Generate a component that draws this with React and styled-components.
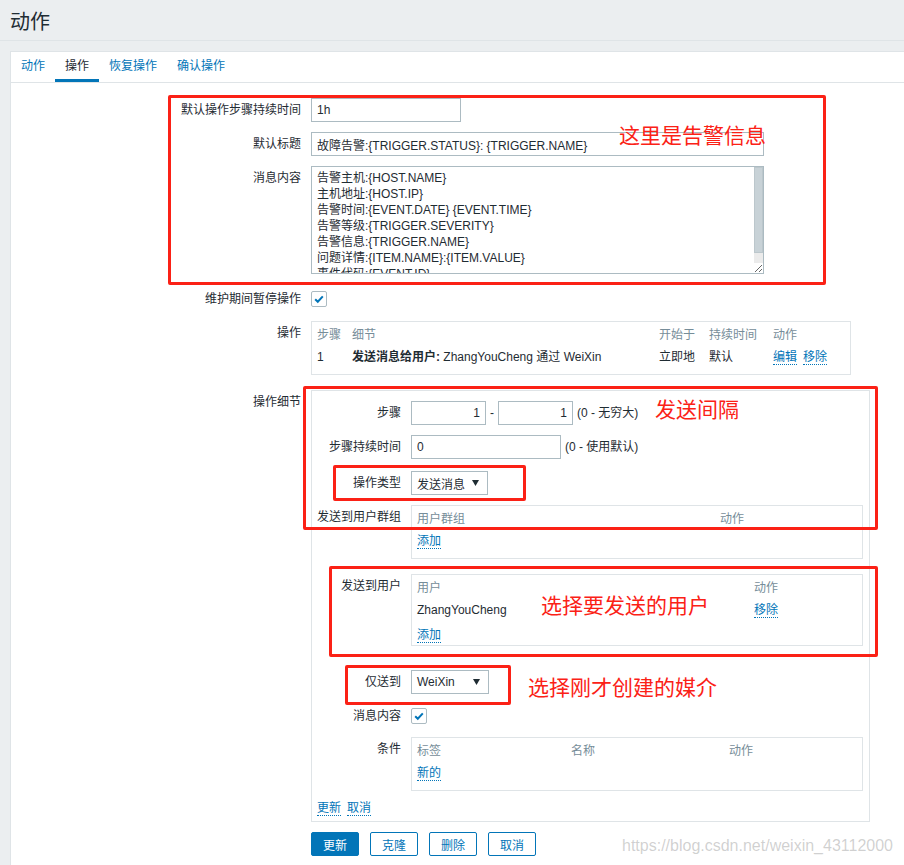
import React from "react";
import styled, { createGlobalStyle } from "styled-components";

const GlobalStyle = createGlobalStyle`
  body {
    margin: 0;
    background: #ebeef0;
    font-family: "Liberation Sans", "Noto Sans CJK SC", sans-serif;
    font-size: 12px;
    color: #1f2c33;
  }
  * { box-sizing: border-box; }
`;

const Page = styled.div`
  position: relative;
  min-height: 100vh;
  display: flex;
  flex-direction: column;
`;

const Header = styled.header`
  height: 41px;
  padding: 0 10px;
  border-bottom: 1px solid #dfe4e7;
  display: flex;
  align-items: center;
`;

const Title = styled.h1`
  margin: 0;
  font-size: 20px;
  font-weight: normal;
  color: #1f2c33;
`;

const Panel = styled.div`
  flex: 1;
  margin: 10px 0 0 10px;
  background: #fff;
  border: 1px solid #dfe4e7;
  border-right: none;
  border-bottom: none;
`;

const TabBar = styled.div`
  display: flex;
  border-bottom: 1px solid #dfe4e7;
`;

const Tab = styled.div`
  padding: 0 10px;
  height: 30px;
  line-height: 29px;
  border-bottom: 3px solid ${(p) => (p.$active ? "#0275b8" : "transparent")};
  color: ${(p) => (p.$active ? "#1f2c33" : "#0275b8")};
`;

const Form = styled.div`
  padding: 15px 0 10px;
`;

const Row = styled.div`
  display: grid;
  grid-template-columns: ${(p) => p.$label}px 1fr;
  column-gap: 10px;
  margin-top: ${(p) => p.$top}px;
`;

const Label = styled.div`
  text-align: right;
  line-height: 24px;
  white-space: nowrap;
`;

const Field = styled.div`
  display: flex;
  align-items: flex-start;
  gap: 4px;
  min-height: 24px;
`;

const Input = styled.input`
  width: ${(p) => p.$w}px;
  height: 24px;
  padding: 0 5px;
  border: 1px solid #acbbc2;
  background: #fff;
  font: inherit;
  color: #1f2c33;
  text-align: ${(p) => p.$align || "left"};
  outline: none;
`;

const TextWrap = styled.div`
  position: relative;
  width: 453px;
  height: 108px;
`;

const TextArea = styled.textarea`
  display: block;
  width: 100%;
  height: 100%;
  padding: 3px 15px 3px 5px;
  border: 1px solid #acbbc2;
  font: inherit;
  line-height: 16px;
  color: #1f2c33;
  resize: vertical;
  overflow: hidden;
  outline: none;
`;

/* the textarea's scrollbar, drawn over its right edge */
const ScrollTrack = styled.div`
  position: absolute;
  top: 1px;
  right: 1px;
  bottom: 11px;
  width: 9px;
  background: #ebebeb;
  pointer-events: none;
`;

const ScrollThumb = styled.div`
  height: 86px;
  background: #c8d2d7;
  border: 1px solid #bcc7cc;
`;

const Hint = styled.span`
  line-height: 24px;
  white-space: nowrap;
`;

const CheckBox = styled.span`
  display: inline-flex;
  align-items: center;
  justify-content: center;
  width: 16px;
  height: 16px;
  margin-top: 4px;
  border: 1px solid #acbbc2;
  border-radius: 2px;
  background: #fff;
`;

const Select = styled.div`
  display: flex;
  align-items: center;
  justify-content: space-between;
  width: ${(p) => p.$w}px;
  height: 24px;
  padding: 0 8px 0 5px;
  border: 1px solid #acbbc2;
  background: #fff;
`;

const Link = styled.a`
  color: #0275b8;
  text-decoration: none;
  border-bottom: 1px dotted #0275b8;
  margin-right: ${(p) => p.$gap || 0}px;
`;

const SubTable = styled.div`
  width: ${(p) => p.$w}px;
  border: 1px solid #dfe4e7;
  padding: 2px 5px ${(p) => (p.$pb === undefined ? 6 : p.$pb)}px;
  display: grid;
  grid-template-columns: ${(p) => p.$cols};
`;

const Th = styled.div`
  line-height: 22px;
  color: #768d99;
  white-space: nowrap;
`;

const Td = styled.div`
  line-height: ${(p) => p.$lh || 22}px;
  white-space: nowrap;
  grid-column: ${(p) => p.$span || "auto"};
  padding-top: ${(p) => p.$pt || 0}px;
`;

const DetailBox = styled.div`
  width: 559px;
  border: 1px solid #dfe4e7;
  padding: 10px 6px 2px 5px;
`;

const Footer = styled.div`
  margin-top: 6px;
  line-height: 22px;
`;

const Buttons = styled.div`
  display: flex;
  gap: 11px;
`;

const Button = styled.button`
  height: 24px;
  padding: 0 11px;
  border: 1px solid #0275b8;
  border-radius: 2px;
  font: inherit;
  background: ${(p) => (p.$primary ? "#0275b8" : "#fff")};
  color: ${(p) => (p.$primary ? "#fff" : "#0275b8")};
`;

/* red annotations drawn over the screenshot */
const Mark = styled.div`
  position: absolute;
  border: 3px solid #fb2116;
  border-radius: 2px;
  pointer-events: none;
`;

const Note = styled.div`
  position: absolute;
  color: #fb2116;
  font-family: "Noto Sans CJK SC", sans-serif;
  font-size: 21px;
  line-height: 22px;
  white-space: nowrap;
`;

const Watermark = styled.div`
  position: absolute;
  left: 622px;
  top: 837px;
  font-family: "Liberation Sans", sans-serif;
  font-size: 16px;
  color: rgba(120, 120, 120, 0.35);
  white-space: nowrap;
`;

const Tick = () => (
  <CheckBox>
    <svg width="12" height="12" viewBox="0 0 12 12">
      <path d="M2.2 6.2 L4.8 8.8 L9.8 3.4" fill="none" stroke="#0275b8" strokeWidth="2" />
    </svg>
  </CheckBox>
);

const Arrow = () => (
  <svg width="7" height="6" viewBox="0 0 7 6">
    <path d="M0 0 H7 L3.5 6 Z" fill="#1f2c33" />
  </svg>
);

const message = [
  "告警主机:{HOST.NAME}",
  "主机地址:{HOST.IP}",
  "告警时间:{EVENT.DATE} {EVENT.TIME}",
  "告警等级:{TRIGGER.SEVERITY}",
  "告警信息:{TRIGGER.NAME}",
  "问题详情:{ITEM.NAME}:{ITEM.VALUE}",
  "事件代码:{EVENT.ID}",
].join("\n");

const marks = [
  { left: 168, top: 95, width: 658, height: 190 },
  { left: 303, top: 386, width: 575, height: 144 },
  { left: 333, top: 465, width: 193, height: 36 },
  { left: 329, top: 566, width: 549, height: 91 },
  { left: 345, top: 665, width: 166, height: 40 },
];

const notes = [
  { left: 619, top: 123, text: "这里是告警信息" },
  { left: 655, top: 397, text: "发送间隔" },
  { left: 541, top: 593, text: "选择要发送的用户" },
  { left: 528, top: 675, text: "选择刚才创建的媒介" },
];

function OperationDetails() {
  return (
    <DetailBox>
      <Row $label={84} $top={0}>
        <Label>步骤</Label>
        <Field>
          <Input $w={75} $align="right" defaultValue="1" />
          <Hint>-</Hint>
          <Input $w={75} $align="right" defaultValue="1" />
          <Hint>(0 - 无穷大)</Hint>
        </Field>
      </Row>
      <Row $label={84} $top={10}>
        <Label>步骤持续时间</Label>
        <Field>
          <Input $w={150} defaultValue="0" />
          <Hint>(0 - 使用默认)</Hint>
        </Field>
      </Row>
      <Row $label={84} $top={12}>
        <Label>操作类型</Label>
        <Field>
          <Select $w={77}>
            <span>发送消息</span>
            <Arrow />
          </Select>
        </Field>
      </Row>
      <Row $label={84} $top={10}>
        <Label>发送到用户群组</Label>
        <SubTable $w={452} $cols="303px 1fr">
          <Th>用户群组</Th>
          <Th>动作</Th>
          <Td $span="1 / -1">
            <Link>添加</Link>
          </Td>
        </SubTable>
      </Row>
      <Row $label={84} $top={15}>
        <Label>发送到用户</Label>
        <SubTable $w={452} $cols="337px 1fr" $pb={1}>
          <Th>用户</Th>
          <Th>动作</Th>
          <Td>ZhangYouCheng</Td>
          <Td>
            <Link>移除</Link>
          </Td>
          <Td $span="1 / -1" $pt={5} $lh={18}>
            <Link>添加</Link>
          </Td>
        </SubTable>
      </Row>
      <Row $label={84} $top={24}>
        <Label>仅送到</Label>
        <Field>
          <Select $w={78}>
            <span>WeiXin</span>
            <Arrow />
          </Select>
        </Field>
      </Row>
      <Row $label={84} $top={10}>
        <Label>消息内容</Label>
        <Field>
          <Tick />
        </Field>
      </Row>
      <Row $label={84} $top={9}>
        <Label>条件</Label>
        <SubTable $w={452} $cols="154px 158px 1fr">
          <Th>标签</Th>
          <Th>名称</Th>
          <Th>动作</Th>
          <Td $span="1 / -1">
            <Link>新的</Link>
          </Td>
        </SubTable>
      </Row>
      <Footer>
        <Link $gap={6}>更新</Link>
        <Link>取消</Link>
      </Footer>
    </DetailBox>
  );
}

export default function App() {
  return (
    <Page>
      <GlobalStyle />
      <Header>
        <Title>动作</Title>
      </Header>
      <Panel>
        <TabBar>
          <Tab>动作</Tab>
          <Tab $active>操作</Tab>
          <Tab>恢复操作</Tab>
          <Tab>确认操作</Tab>
        </TabBar>
        <Form>
          <Row $label={290} $top={0}>
            <Label>默认操作步骤持续时间</Label>
            <Field>
              <Input $w={150} defaultValue="1h" />
            </Field>
          </Row>
          <Row $label={290} $top={10}>
            <Label>默认标题</Label>
            <Field>
              <Input $w={453} defaultValue="故障告警:{TRIGGER.STATUS}: {TRIGGER.NAME}" />
            </Field>
          </Row>
          <Row $label={290} $top={10}>
            <Label>消息内容</Label>
            <Field>
              <TextWrap>
                <TextArea readOnly value={message} />
                <ScrollTrack>
                  <ScrollThumb />
                </ScrollTrack>
              </TextWrap>
            </Field>
          </Row>
          <Row $label={290} $top={13}>
            <Label>维护期间暂停操作</Label>
            <Field>
              <Tick />
            </Field>
          </Row>
          <Row $label={290} $top={10}>
            <Label>操作</Label>
            <SubTable $w={540} $cols="35px 307px 50px 64px 1fr">
              <Th>步骤</Th>
              <Th>细节</Th>
              <Th>开始于</Th>
              <Th>持续时间</Th>
              <Th>动作</Th>
              <Td>1</Td>
              <Td>
                <b>发送消息给用户:</b> ZhangYouCheng 通过 WeiXin
              </Td>
              <Td>立即地</Td>
              <Td>默认</Td>
              <Td>
                <Link $gap={6}>编辑</Link>
                <Link>移除</Link>
              </Td>
            </SubTable>
          </Row>
          <Row $label={290} $top={15}>
            <Label>操作细节</Label>
            <OperationDetails />
          </Row>
          <Row $label={290} $top={10}>
            <div />
            <Buttons>
              <Button $primary>更新</Button>
              <Button>克隆</Button>
              <Button>删除</Button>
              <Button>取消</Button>
            </Buttons>
          </Row>
        </Form>
      </Panel>
      {marks.map((m, i) => (
        <Mark key={i} style={{ left: m.left, top: m.top, width: m.width, height: m.height }} />
      ))}
      {notes.map((n, i) => (
        <Note key={i} style={{ left: n.left, top: n.top }}>
          {n.text}
        </Note>
      ))}
      <Watermark>https://blog.csdn.net/weixin_43112000</Watermark>
    </Page>
  );
}
